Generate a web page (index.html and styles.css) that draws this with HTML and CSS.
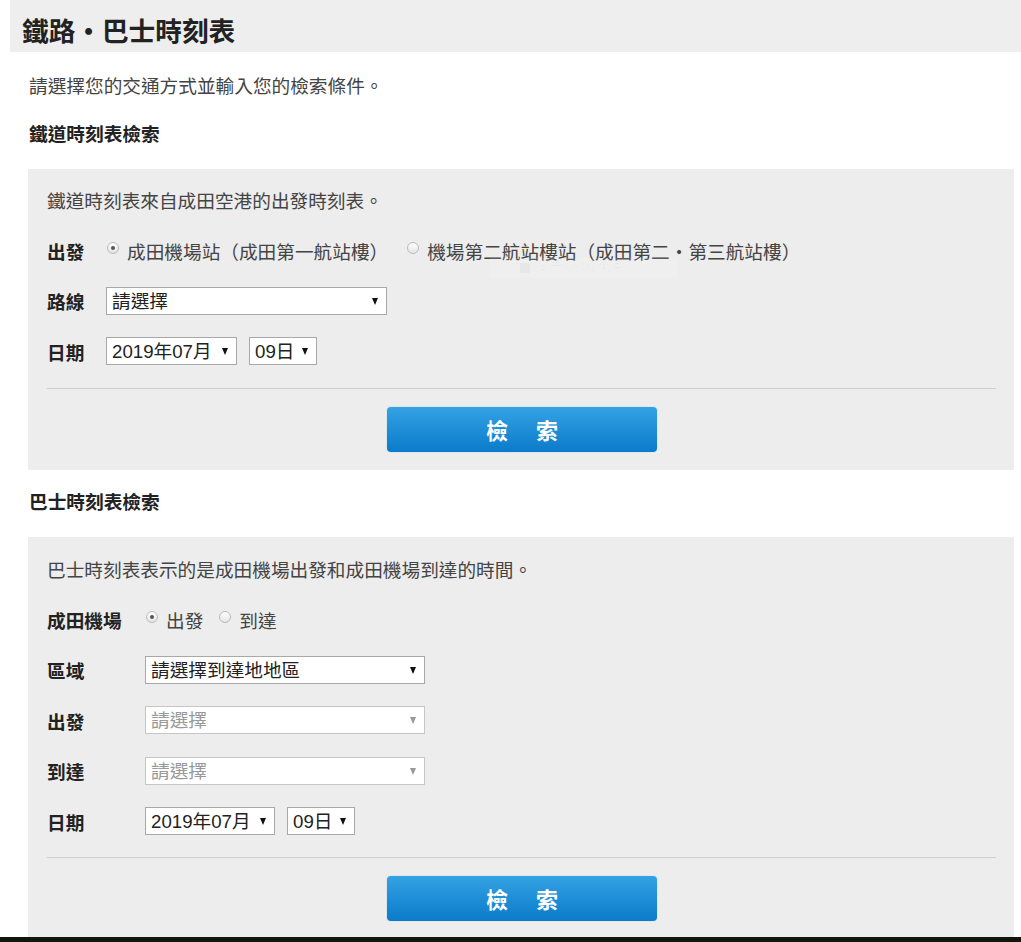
FILE: index.html
```html
<!DOCTYPE html>
<html lang="zh-Hant">
<head>
<meta charset="utf-8">
<title>鐵路・巴士時刻表</title>
<link rel="stylesheet" href="styles.css">
</head>
<body>
<div class="page">
  <h1 class="page-title">鐵路・巴士時刻表</h1>
  <div class="content">
    <p class="intro">請選擇您的交通方式並輸入您的檢索條件。</p>

    <h2 class="section-title">鐵道時刻表檢索</h2>
    <div class="search-box">
      <p class="box-desc">鐵道時刻表來自成田空港的出發時刻表。</p>
      <div class="rows">
        <div class="form-row">
          <span class="row-label">出發</span>
          <label class="radio-option"><span class="radio checked"></span>成田機場站（成田第一航站樓）</label>
          <label class="radio-option"><span class="radio"></span>機場第二航站樓站（成田第二・第三航站樓）</label>
        </div>
        <div class="form-row">
          <span class="row-label">路線</span>
          <div class="select-wrap w-route"><select><option>請選擇</option></select></div>
        </div>
        <div class="form-row">
          <span class="row-label">日期</span>
          <div class="date-group">
            <div class="select-wrap w-month"><select><option>2019年07月</option></select></div>
            <div class="select-wrap w-day"><select><option>09日</option></select></div>
          </div>
        </div>
      </div>
      <hr class="divider">
      <div class="btn-row"><button class="search-btn"><span>檢</span><span>索</span></button></div>
      <div class="ghost-tip"><span class="ghost-icon"></span>顯示搜尋結果(R)</div>
    </div>

    <h2 class="section-title">巴士時刻表檢索</h2>
    <div class="search-box bus">
      <p class="box-desc">巴士時刻表表示的是成田機場出發和成田機場到達的時間。</p>
      <div class="rows">
        <div class="form-row">
          <span class="row-label wide">成田機場</span>
          <label class="radio-option tight"><span class="radio checked"></span>出發</label>
          <label class="radio-option tight"><span class="radio"></span>到達</label>
        </div>
        <div class="form-row">
          <span class="row-label wide">區域</span>
          <div class="select-wrap w-area"><select><option>請選擇到達地地區</option></select></div>
        </div>
        <div class="form-row">
          <span class="row-label wide">出發</span>
          <div class="select-wrap w-area disabled"><select disabled><option>請選擇</option></select></div>
        </div>
        <div class="form-row">
          <span class="row-label wide">到達</span>
          <div class="select-wrap w-area disabled"><select disabled><option>請選擇</option></select></div>
        </div>
        <div class="form-row">
          <span class="row-label wide">日期</span>
          <div class="date-group">
            <div class="select-wrap w-month2"><select><option>2019年07月</option></select></div>
            <div class="select-wrap w-day"><select><option>09日</option></select></div>
          </div>
        </div>
      </div>
      <hr class="divider">
      <div class="btn-row"><button class="search-btn"><span>檢</span><span>索</span></button></div>
    </div>
  </div>
  <div class="footer-bar"></div>
</div>
</body>
</html>
```

FILE: styles.css
```css
html, body {
  margin: 0;
  padding: 0;
  background: #fff;
}

body {
  font-family: "Liberation Sans", "Noto Sans CJK TC", sans-serif;
  color: #333;
  font-size: 18.67px;
  overflow: hidden;
}

.page {
  width: 1021px;
  height: 942px;
  display: flex;
  flex-direction: column;
}

.page-title {
  margin: 0 0 0 10px;
  height: 52px;
  flex: none;
  box-sizing: border-box;
  padding: 14px 0 0 12px;
  background: #eeeeee;
  font-size: 26.67px;
  line-height: 36px;
  font-weight: bold;
  color: #222;
}

.content {
  padding: 0 7px 0 28px;
  flex: 1;
  min-height: 0;
}

.intro {
  margin: 20px 0 0 1px;
  line-height: 30px;
  color: #444;
}

.section-title {
  margin: 18px 0 19px 1px;
  font-size: 18.67px;
  line-height: 30px;
  font-weight: bold;
  color: #222;
}

.search-box {
  position: relative;
  background: #ededed;
  padding: 18px 18px 18px 19px;
}

.search-box.bus {
  padding-top: 19px;
  padding-bottom: 16px;
}

.box-desc {
  margin: 0;
  line-height: 30px;
  color: #444;
}

.rows {
  margin-top: 18px;
  display: flex;
  flex-direction: column;
  gap: 20.5px;
}

.form-row {
  display: flex;
  align-items: center;
  height: 30px;
}

.row-label {
  width: 59px;
  flex: none;
  font-weight: bold;
  color: #222;
}

.row-label.wide {
  width: 98px;
}

.radio-option {
  display: flex;
  align-items: center;
  gap: 8px;
  margin-right: 18px;
  color: #444;
}

.radio-option.tight {
  margin-right: 15px;
}

.radio {
  position: relative;
  width: 12px;
  height: 12px;
  box-sizing: border-box;
  border-radius: 50%;
  border: 1px solid #b9b9b9;
  background: linear-gradient(#ffffff, #e4e4e4);
  margin-top: -4px;
  margin-left: 1px;
}

.radio.checked::after {
  content: "";
  position: absolute;
  left: 3px;
  top: 3px;
  width: 4px;
  height: 4px;
  border-radius: 50%;
  background: #555;
}

.select-wrap {
  position: relative;
  height: 28px;
}

.select-wrap::after {
  content: "";
  position: absolute;
  right: 9px;
  top: 11px;
  border-left: 3.5px solid transparent;
  border-right: 3.5px solid transparent;
  border-top: 7px solid #111;
  pointer-events: none;
}

.select-wrap.disabled::after {
  border-top-color: #999;
}

.select-wrap select {
  appearance: none;
  -webkit-appearance: none;
  width: 100%;
  height: 28px;
  box-sizing: border-box;
  margin: 0;
  padding: 1px 20px 0 5px;
  border: 1px solid #a8a8a8;
  border-radius: 0;
  background: #fff;
  font-family: "Liberation Sans", "Noto Sans CJK TC", sans-serif;
  font-size: 18.67px;
  color: #222;
  line-height: 26px;
}

.select-wrap.disabled select {
  color: #999;
  border-color: #c6c6c6;
  opacity: 1;
}

.w-route { width: 281px; }
.w-month { width: 131px; }
.w-month2 { width: 130px; }
.w-day { width: 68px; }
.w-area { width: 280px; }

.date-group {
  display: flex;
  gap: 12px;
}

.divider {
  margin: 22px 0 0 0;
  border: 0;
  border-top: 1px solid #cfcfcf;
  height: 0;
}

.bus .divider {
  margin-top: 21px;
}

.btn-row {
  display: flex;
  justify-content: center;
  margin-top: 18px;
}

.search-btn {
  width: 270px;
  height: 45px;
  border: 0;
  border-radius: 4px;
  background: linear-gradient(#34a2e3, #0b7bcb);
  box-shadow: 0 0 1px rgba(30, 130, 210, 0.5);
  color: #fff;
  font-family: "Liberation Sans", "Noto Sans CJK TC", sans-serif;
  font-size: 22px;
  font-weight: bold;
  display: flex;
  align-items: center;
  justify-content: center;
  gap: 28px;
  padding: 0 0 2px 1px;
}

.ghost-tip {
  position: absolute;
  left: 462px;
  top: 89px;
  width: 187px;
  height: 20px;
  background: rgba(255, 255, 255, 0.12);
  color: rgba(0, 0, 0, 0.03);
  font-size: 12px;
  line-height: 20px;
  display: flex;
  align-items: center;
  gap: 8px;
  padding-left: 30px;
  box-sizing: border-box;
}

.ghost-icon {
  width: 10px;
  height: 10px;
  background: rgba(0, 0, 0, 0.03);
}

.footer-bar {
  height: 5px;
  background: #13150d;
  flex: none;
}
```
